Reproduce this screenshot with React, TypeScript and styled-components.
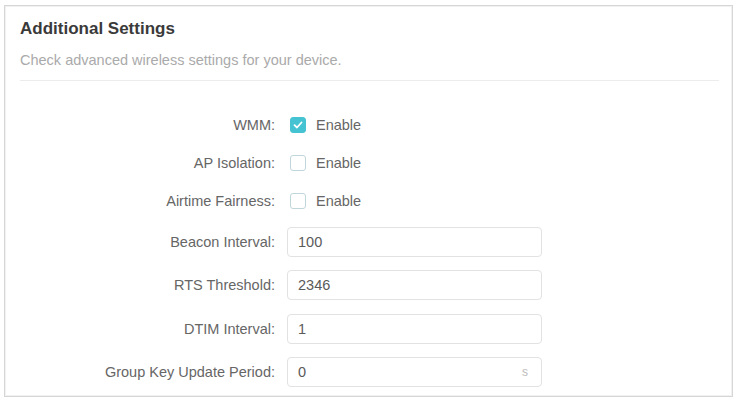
import React from "react";
import styled, { createGlobalStyle } from "styled-components";

const GlobalStyle = createGlobalStyle`
	html, body {
		margin: 0;
		padding: 0;
		background: #fff;
		font-family: "Liberation Sans", Arial, sans-serif;
	}
`

const Card = styled.section`
	box-sizing: border-box;
	margin: 5px 0 0 4px;
	width: 729px;
	height: 392px;
	border: 1px solid #d6d6d6;
	box-shadow: inset 0 0 0 1px #f1f1f1;
	background: #fff;
	padding: 13px 13px 0 0;
`

const Header = styled.div`
	margin-left: 15px;
	border-bottom: 1px solid #ececec;
	padding-bottom: 11px;
`

const Title = styled.h2`
	margin: 0;
	font-size: 17px;
	line-height: 20px;
	font-weight: bold;
	color: #3a3a3a;
`

const Subtitle = styled.p`
	margin: 12px 0 0;
	font-size: 14.5px;
	line-height: 18px;
	color: #aaa;
`

const Form = styled.div`
	margin-top: 25px;
	display: flex;
	flex-direction: column;
`

const Row = styled.div<{ tall?: boolean }>`
	display: grid;
	grid-template-columns: 270px 1fr;
	column-gap: 12px;
	align-items: center;
	height: ${props => props.tall ? "43.5px" : "38px"};
`

const Label = styled.label`
	text-align: right;
	font-size: 14.5px;
	color: #666;
`

const CheckWrap = styled.label`
	display: flex;
	align-items: center;
	gap: 10px;
	font-size: 14.5px;
	color: #666;
	margin-left: 3px;
`

const Box = styled.span<{ checked?: boolean }>`
	box-sizing: border-box;
	width: 16px;
	height: 16px;
	border-radius: 3px;
	border: 1px solid ${props => props.checked ? "#45c3d2" : "#bfd7db"};
	background: ${props => props.checked ? "#45c3d2" : "#fff"};
	display: flex;
	align-items: center;
	justify-content: center;
`

const Field = styled.div`
	box-sizing: border-box;
	position: relative;
	width: 255px;
	height: 30px;
	border: 1px solid #e2e2e2;
	border-radius: 4px;
	display: flex;
	align-items: center;
	padding: 0 10px;
`

const Value = styled.span`
	flex: 1;
	font-size: 14.5px;
	color: #5a5a5a;
`

const Unit = styled.span`
	font-size: 12px;
	color: #bbb;
	margin-right: 3px;
`

const Check = ({ checked }: { checked?: boolean }) => (
	<CheckWrap>
		<Box checked={checked}>
			{checked && (
				<svg width="10" height="8" viewBox="0 0 10 8">
					<path d="M1.5 4.2 L4 6.5 L8.5 1.5" fill="none" stroke="#fff" strokeWidth="1.8" strokeLinecap="round" strokeLinejoin="round" />
				</svg>
			)}
		</Box>
		Enable
	</CheckWrap>
)

const checks = [
	{ label: "WMM:", checked: true },
	{ label: "AP Isolation:", checked: false },
	{ label: "Airtime Fairness:", checked: false },
]

const fields = [
	{ label: "Beacon Interval:", value: "100" },
	{ label: "RTS Threshold:", value: "2346" },
	{ label: "DTIM Interval:", value: "1" },
	{ label: "Group Key Update Period:", value: "0", unit: "s" },
]

export default function App() {
	return (
		<>
			<GlobalStyle />
			<Card>
				<Header>
					<Title>Additional Settings</Title>
					<Subtitle>Check advanced wireless settings for your device.</Subtitle>
				</Header>
				<Form>
					{checks.map(c => (
						<Row key={c.label}>
							<Label>{c.label}</Label>
							<Check checked={c.checked} />
						</Row>
					))}
					{fields.map(f => (
						<Row key={f.label} tall>
							<Label>{f.label}</Label>
							<Field>
								<Value>{f.value}</Value>
								{f.unit && <Unit>{f.unit}</Unit>}
							</Field>
						</Row>
					))}
				</Form>
			</Card>
		</>
	);
}
